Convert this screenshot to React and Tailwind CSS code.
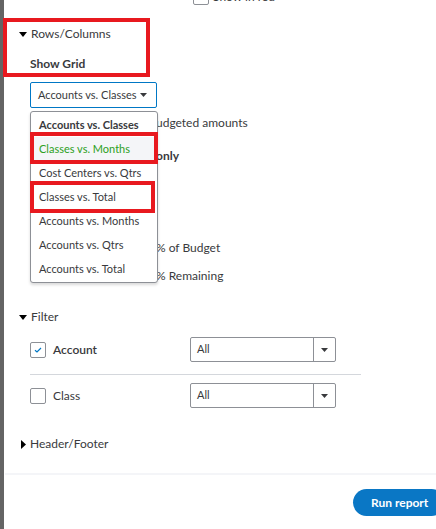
import React from 'react';

const RED = 'border-[#e8191f]';

function Caret({ dir = 'down' }) {
  if (dir === 'right') {
    return (
      <svg width="5" height="9" viewBox="0 0 5 9" className="shrink-0">
        <polygon points="0,0 5,4.5 0,9" fill="#000" />
      </svg>
    );
  }
  return (
    <svg width="8" height="5" viewBox="0 0 8 5" className="shrink-0">
      <polygon points="0,0 8,0 4,5" fill="#000" />
    </svg>
  );
}

function SmallCaret() {
  return (
    <svg width="7" height="4" viewBox="0 0 7 4" className="shrink-0">
      <polygon points="0,0 7,0 3.5,4" fill="#393a3d" />
    </svg>
  );
}

function Checkbox({ checked }) {
  return (
    <div className="flex h-[16px] w-[16px] shrink-0 items-center justify-center rounded-[2px] border border-[#8d9096] bg-white">
      {checked && (
        <svg width="8" height="6" viewBox="0 0 8 6">
          <path d="M1 3.2 L3 5 L7 1" fill="none" stroke="#0077c5" strokeWidth="1.2" />
        </svg>
      )}
    </div>
  );
}

function SelectAll() {
  return (
    <div className="flex h-[25px] w-[146px] rounded-[2px] border border-[#8d9096] bg-white">
      <div className="flex w-[123px] items-center border-r border-[#8d9096] pl-[6px] text-[11px]">All</div>
      <div className="flex flex-1 items-center justify-center">
        <SmallCaret />
      </div>
    </div>
  );
}

const options = [
  'Accounts vs. Classes',
  'Classes vs. Months',
  'Cost Centers vs. Qtrs',
  'Classes vs. Total',
  'Accounts vs. Months',
  'Accounts vs. Qtrs',
  'Accounts vs. Total',
];

export default function App() {
  return (
    <div className="flex h-[529px] w-[436px] overflow-hidden bg-white font-['Lato',sans-serif] text-[#393a3d]">
      <div className="w-[4px] shrink-0 bg-[#646464]" />
      <div className="flex min-w-0 flex-1 flex-col">
        <div className="h-[473px]">
          {/* checkbox row scrolled mostly out of view */}
          <div className="ml-[189px] mt-[-11px] flex h-[16px] items-center gap-[4px]">
            <Checkbox />
            <span className="text-[12px] whitespace-nowrap">Show in red</span>
          </div>

          <div className={`ml-[-1px] mt-[13px] h-[59px] w-[147px] border-4 ${RED} pt-[4px]`}>
            <div className="flex h-[16px] items-center gap-[4px] pl-[12px]">
              <Caret />
              <span className="text-[12px]">Rows/Columns</span>
            </div>
            <div className="mt-[14px] flex h-[16px] items-center pl-[23px] text-[12px] font-bold">Show Grid</div>
          </div>

          <div className="ml-[26px] mt-[5px] flex h-[26px] w-[127px] items-center justify-between rounded-[2px] border border-[#0077c5] pl-[7px] pr-[9px]">
            <span className="text-[11px] whitespace-nowrap">Accounts vs. Classes</span>
            <SmallCaret />
          </div>

          <div className="relative">
            <div className="ml-[152px] pt-[7px] text-[12px]">
              <div className="flex h-[16px] items-center">udgeted amounts</div>
              <div className="mt-[17px] flex h-[16px] items-center font-bold">only</div>
              <div className="mt-[76px] flex h-[16px] items-center">% of Budget</div>
              <div className="mt-[12px] flex h-[16px] items-center">% Remaining</div>
            </div>

            <div className="absolute left-[26px] top-[3px] w-[128px] rounded-[3px] border border-[#8d9096] bg-white py-[1px] shadow-[0_2px_3px_rgba(0,0,0,0.15)]">
              {options.map((o, i) => (
                <div
                  key={o}
                  className={
                    'flex h-[24px] items-center pl-[8px] text-[11px] whitespace-nowrap ' +
                    (i === 0 ? 'font-bold ' : '') +
                    (i === 1 ? 'bg-[#f4f5f8] text-[#2ca01c]' : '')
                  }
                >
                  {o}
                </div>
              ))}
              <div className={`absolute left-[-1px] top-[20px] h-[32px] w-[128px] border-4 ${RED}`} />
              <div className={`absolute left-[-1px] top-[69px] h-[32px] w-[125px] border-4 ${RED}`} />
            </div>
          </div>

          <div className="ml-[15px] mt-[25px] flex h-[16px] items-center gap-[4px]">
            <Caret />
            <span className="text-[12px]">Filter</span>
          </div>

          <div className="ml-[26px] mt-[12px] flex h-[25px] items-center">
            <div className="flex w-[160px] items-center gap-[7px]">
              <Checkbox checked />
              <span className="text-[12px] font-semibold">Account</span>
            </div>
            <SelectAll />
          </div>

          <div className="ml-[26px] mt-[12px] h-[1px] w-[331px] bg-[#d4d7dc]" />

          <div className="ml-[26px] mt-[8px] flex h-[25px] items-center">
            <div className="flex w-[160px] items-center gap-[7px]">
              <Checkbox />
              <span className="text-[12px]">Class</span>
            </div>
            <SelectAll />
          </div>

          <div className="ml-[17px] mt-[28px] flex h-[16px] items-center gap-[4px]">
            <Caret dir="right" />
            <span className="text-[12px]">Header/Footer</span>
          </div>
        </div>

        <div className="ml-[1px] h-[2px] bg-[#f4f5f8]" />

        <div className="pt-[14px]">
          <button className="ml-[349px] flex h-[27px] w-[92px] items-center rounded-full bg-[#0a77c5] pl-[18px] text-[12px] font-bold text-white whitespace-nowrap">
            Run report
          </button>
        </div>
      </div>
    </div>
  );
}
